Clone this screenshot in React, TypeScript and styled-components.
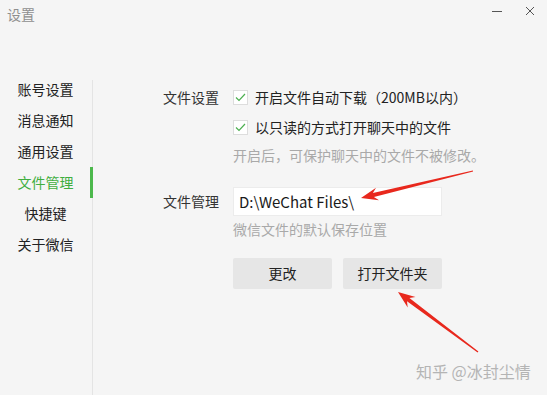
import React from "react";
import styled, { createGlobalStyle } from "styled-components";

const GlobalStyle = createGlobalStyle`
  html, body {
    margin: 0;
    padding: 0;
    background: #f5f5f5;
  }
  body {
    font-family: "Noto Sans CJK SC", "Noto Sans", sans-serif;
  }
`;

type Pt = [number, number];

const arrowPoints = (tip: Pt, tail: Pt, headLen: number, headW: number, shaft0: number, shaft1: number) => {
  const dx = tail[0] - tip[0];
  const dy = tail[1] - tip[1];
  const len = Math.hypot(dx, dy);
  const ux = dx / len;
  const uy = dy / len;
  const nx = -uy;
  const ny = ux;
  const at = (d: number, w: number): string =>
    `${(tip[0] + ux * d + nx * w).toFixed(1)},${(tip[1] + uy * d + ny * w).toFixed(1)}`;
  return [
    at(0, 0),
    at(headLen, headW / 2),
    at(headLen * 0.75, shaft0 / 2),
    at(len, shaft1 / 2),
    at(len, -shaft1 / 2),
    at(headLen * 0.75, -shaft0 / 2),
    at(headLen, -headW / 2),
  ].join(" ");
};

const menu = ["账号设置", "消息通知", "通用设置", "文件管理", "快捷键", "关于微信"];

const Check: React.FC = () => (
  <CheckBox>
    <svg width="11" height="9" viewBox="0 0 11 9">
      <path d="M1 4.5 L4 7.5 L10 1" fill="none" stroke="#4caf50" strokeWidth="1.2" />
    </svg>
  </CheckBox>
);

const App: React.FC = () => {
  return (
    <Window>
      <GlobalStyle />
      <TitleBar>
        <Title>设置</Title>
        <WinButtons>
          <svg width="12" height="12" viewBox="0 0 12 12">
            <line x1="1" y1="6.5" x2="11" y2="6.5" stroke="#555" strokeWidth="1" />
          </svg>
          <svg width="12" height="12" viewBox="0 0 12 12">
            <path d="M2 2 L10 10 M10 2 L2 10" stroke="#555" strokeWidth="1" />
          </svg>
        </WinButtons>
      </TitleBar>

      <Body>
        <Sidebar>
          <NavList>
            {menu.map((item) => (
              <NavItem key={item} $active={item === "文件管理"}>
                {item}
              </NavItem>
            ))}
          </NavList>
        </Sidebar>

        <Content>
          <Section>
            <Label>文件设置</Label>
            <Controls>
              <CheckRow>
                <Check />
                <span>开启文件自动下载（200MB以内）</span>
              </CheckRow>
              <CheckRow>
                <Check />
                <span>以只读的方式打开聊天中的文件</span>
              </CheckRow>
              <Hint>开启后，可保护聊天中的文件不被修改。</Hint>
            </Controls>
          </Section>

          <Section $gap={19}>
            <Label $lh={29}>文件管理</Label>
            <Controls>
              <PathInput>D:\WeChat Files\</PathInput>
              <Hint>微信文件的默认保存位置</Hint>
              <ButtonRow>
                <Button>更改</Button>
                <Button>打开文件夹</Button>
              </ButtonRow>
            </Controls>
          </Section>
        </Content>
      </Body>

      <Watermark>知乎 @冰封尘情</Watermark>

      <Overlay width="547" height="395" viewBox="0 0 547 395">
        <polygon points={arrowPoints([361, 198], [473, 171], 17, 13, 4, 1.2)} fill="#e8281d" />
        <polygon points={arrowPoints([398, 292], [478, 352], 17, 13, 4, 1.2)} fill="#e8281d" />
      </Overlay>
    </Window>
  );
};

const Window = styled.div`
  position: relative;
  width: 547px;
  height: 395px;
  background: #f5f5f5;
  overflow: hidden;
  display: flex;
  flex-direction: column;
`;

const TitleBar = styled.div`
  height: 30px;
  display: flex;
  align-items: flex-start;
  justify-content: space-between;
`;

const Title = styled.div`
  margin: 5px 0 0 7px;
  font-size: 14px;
  line-height: 18px;
  color: #8f8f8f;
`;

const WinButtons = styled.div`
  display: flex;
  gap: 21px;
  margin: 5px 11px 0 0;
`;

const Body = styled.div`
  flex: 1;
  display: flex;
`;

const Sidebar = styled.div`
  width: 93px;
  margin-top: 50px;
  padding-left: 17px;
  box-sizing: border-box;
  border-right: 1px solid #e4e4e4;
`;

const NavList = styled.div`
  margin-top: -6px;
  display: flex;
  flex-direction: column;
`;

const NavItem = styled.div<{ $active?: boolean }>`
  position: relative;
  width: 57px;
  height: 31px;
  line-height: 31px;
  text-align: center;
  font-size: 14px;
  color: ${(p) => (p.$active ? "#3fae3f" : "#222")};

  &::after {
    content: "";
    display: ${(p) => (p.$active ? "block" : "none")};
    position: absolute;
    top: 0;
    bottom: 0;
    right: -19px;
    width: 3px;
    background: #4cb84c;
  }
`;

const Content = styled.div`
  flex: 1;
  padding: 52px 0 0 70px;
`;

const Section = styled.div<{ $gap?: number }>`
  display: grid;
  grid-template-columns: 70px auto;
  align-items: start;
  margin-top: ${(p) => p.$gap ?? 0}px;
`;

const Label = styled.div<{ $lh?: number }>`
  font-size: 14px;
  line-height: ${(p) => p.$lh ?? 30}px;
  color: #333;
`;

const Controls = styled.div`
  display: flex;
  flex-direction: column;
  align-items: flex-start;
`;

const CheckRow = styled.div`
  height: 30px;
  display: flex;
  align-items: center;
  gap: 7px;
  font-size: 14px;
  color: #222;
`;

const CheckBox = styled.span`
  width: 15px;
  height: 15px;
  box-sizing: border-box;
  border: 1px solid #dddddd;
  background: #fff;
  display: flex;
  align-items: center;
  justify-content: center;
`;

const Hint = styled.div`
  font-size: 14px;
  line-height: 26px;
  color: #a9a9a9;
`;

const PathInput = styled.div`
  width: 209px;
  height: 29px;
  box-sizing: border-box;
  padding-left: 5px;
  background: #fff;
  border: 1px solid #ececec;
  font-size: 15px;
  line-height: 27px;
  color: #1a1a1a;
`;

const ButtonRow = styled.div`
  display: flex;
  gap: 11px;
  margin-top: 16px;
`;

const Button = styled.div`
  width: 99px;
  height: 31px;
  background: #e6e6e6;
  border-radius: 2px;
  font-size: 14px;
  line-height: 31px;
  text-align: center;
  color: #222;
`;

const Watermark = styled.div`
  position: absolute;
  left: 416px;
  top: 360px;
  font-size: 16px;
  line-height: 22px;
  color: #b4b4b4;
`;

const Overlay = styled.svg`
  position: absolute;
  left: 0;
  top: 0;
  pointer-events: none;
`;

export default App;
